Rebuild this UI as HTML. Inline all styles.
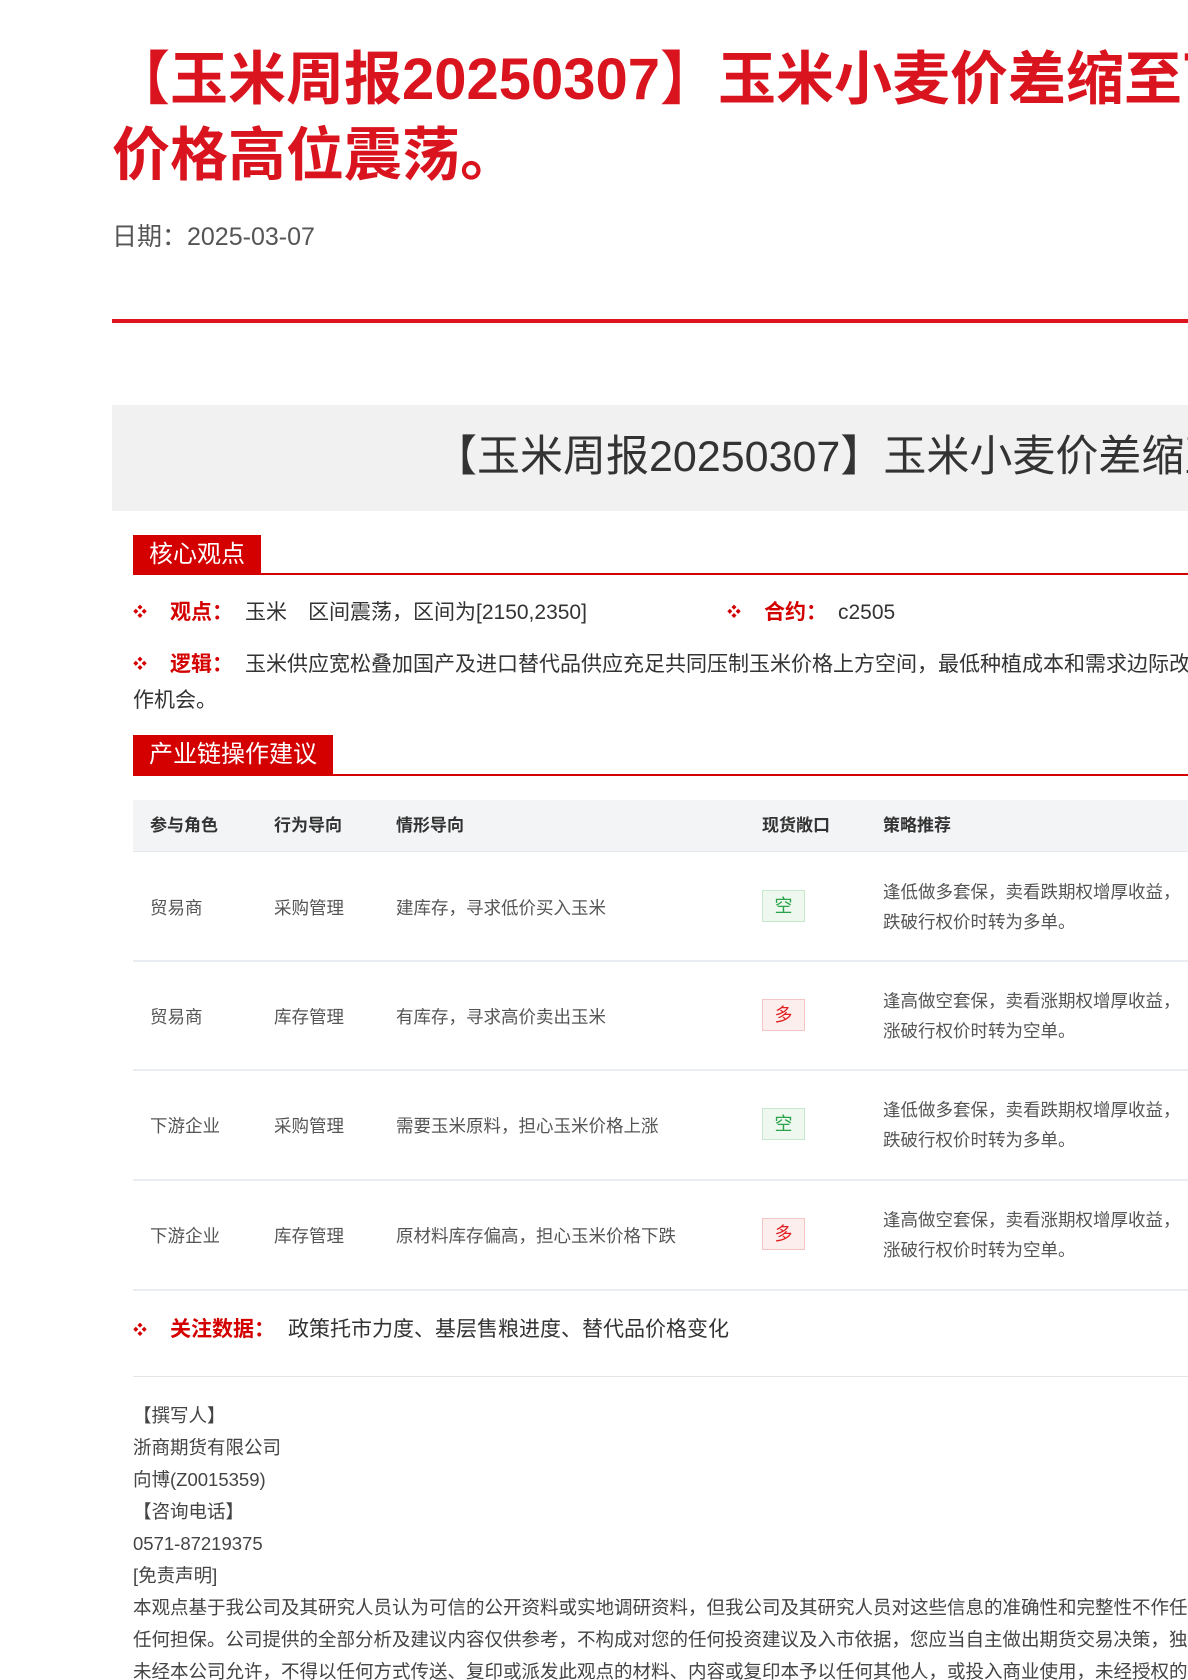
<!DOCTYPE html>
<html><head><meta charset="utf-8"><style>
*{margin:0;padding:0;box-sizing:border-box}
html,body{width:1188px;height:1680px;overflow:hidden;background:#fff}
body{position:relative;font-family:"Liberation Sans","Noto Sans CJK SC",sans-serif;color:#333}
.a{position:absolute;white-space:nowrap;line-height:1.2}
.title{left:112px;top:42px;font-size:58px;font-weight:bold;color:#d9141e;line-height:76px!important}
.date{left:112px;top:222px;font-size:25px;color:#555}
.redline{left:112px;top:319px;width:1100px;height:4px;background:#e0141e}
.gbox{left:112px;top:405px;width:1100px;height:106px;background:#f1f1f1}
.gtitle{left:434px;top:432px;font-size:43px;color:#333;line-height:50px!important}
.sec{left:133px;height:40px;background:#d40000;color:#fff;font-size:24px;line-height:40px!important;padding:0 16px}
.secline{left:133px;width:1100px;height:2px;background:#d40000}
.b{color:#d40000;font-size:14px}
.lbl{color:#d40000;font-weight:bold;font-size:21px}
.t{font-size:21px;color:#333}
.th{left:133px;top:800px;width:1100px;height:52px;background:#f3f4f6;border-bottom:1px solid #e5e8ee}
.h{font-size:17px;font-weight:bold;color:#333;top:816px}
.c{font-size:17.5px;color:#555}
.rl{left:133px;width:1100px;height:2px;background:#e9ecf1}
.tag{width:43px;height:32px;font-size:18px;text-align:center;line-height:30px!important;border:1px solid}
.k{color:#2aa24a;background:#eef8ef;border-color:#c7e8cc}
.d{color:#e02020;background:#fdeeee;border-color:#f5c4c4}
.f{left:133px;font-size:18.5px;color:#444}
</style></head><body>
<div class="a title">【玉米周报20250307】玉米小麦价差缩至可<br>价格高位震荡。</div>
<div class="a date">日期：2025-03-07</div>
<div class="a redline"></div>
<div class="a gbox"></div>
<div class="a gtitle">【玉米周报20250307】玉米小麦价差缩至可</div>

<div class="a sec" style="top:535px">核心观点</div>
<div class="a secline" style="top:573px"></div>
<div class="a b" style="left:133px;top:604px">❖</div>
<div class="a lbl" style="left:170px;top:600px">观点：</div>
<div class="a t" style="left:245px;top:600px">玉米　区间震荡，区间为[2150,2350]</div>
<div class="a b" style="left:727px;top:604px">❖</div>
<div class="a lbl" style="left:764px;top:600px">合约：</div>
<div class="a t" style="left:838px;top:600px">c2505</div>
<div class="a b" style="left:133px;top:656px">❖</div>
<div class="a lbl" style="left:170px;top:652px">逻辑：</div>
<div class="a t" style="left:245px;top:652px">玉米供应宽松叠加国产及进口替代品供应充足共同压制玉米价格上方空间，最低种植成本和需求边际改善</div>
<div class="a t" style="left:133px;top:688px">作机会。</div>

<div class="a sec" style="top:735px">产业链操作建议</div>
<div class="a secline" style="top:774px"></div>

<div class="a th"></div>
<div class="a h" style="left:150px">参与角色</div>
<div class="a h" style="left:274px">行为导向</div>
<div class="a h" style="left:396px">情形导向</div>
<div class="a h" style="left:762px">现货敞口</div>
<div class="a h" style="left:883px">策略推荐</div>

<div class="a c" style="left:150px;top:898px">贸易商</div>
<div class="a c" style="left:274px;top:898px">采购管理</div>
<div class="a c" style="left:396px;top:898px">建库存，寻求低价买入玉米</div>
<div class="a tag k" style="left:762px;top:890px">空</div>
<div class="a c" style="left:883px;top:882px">逢低做多套保，卖看跌期权增厚收益，</div>
<div class="a c" style="left:883px;top:912px">跌破行权价时转为多单。</div>
<div class="a rl" style="top:960px"></div>

<div class="a c" style="left:150px;top:1007px">贸易商</div>
<div class="a c" style="left:274px;top:1007px">库存管理</div>
<div class="a c" style="left:396px;top:1007px">有库存，寻求高价卖出玉米</div>
<div class="a tag d" style="left:762px;top:999px">多</div>
<div class="a c" style="left:883px;top:991px">逢高做空套保，卖看涨期权增厚收益，</div>
<div class="a c" style="left:883px;top:1021px">涨破行权价时转为空单。</div>
<div class="a rl" style="top:1069px"></div>

<div class="a c" style="left:150px;top:1116px">下游企业</div>
<div class="a c" style="left:274px;top:1116px">采购管理</div>
<div class="a c" style="left:396px;top:1116px">需要玉米原料，担心玉米价格上涨</div>
<div class="a tag k" style="left:762px;top:1108px">空</div>
<div class="a c" style="left:883px;top:1100px">逢低做多套保，卖看跌期权增厚收益，</div>
<div class="a c" style="left:883px;top:1130px">跌破行权价时转为多单。</div>
<div class="a rl" style="top:1179px"></div>

<div class="a c" style="left:150px;top:1226px">下游企业</div>
<div class="a c" style="left:274px;top:1226px">库存管理</div>
<div class="a c" style="left:396px;top:1226px">原材料库存偏高，担心玉米价格下跌</div>
<div class="a tag d" style="left:762px;top:1218px">多</div>
<div class="a c" style="left:883px;top:1210px">逢高做空套保，卖看涨期权增厚收益，</div>
<div class="a c" style="left:883px;top:1240px">涨破行权价时转为空单。</div>
<div class="a rl" style="top:1289px"></div>

<div class="a b" style="left:133px;top:1322px">❖</div>
<div class="a lbl" style="left:170px;top:1317px">关注数据：</div>
<div class="a t" style="left:288px;top:1317px">政策托市力度、基层售粮进度、替代品价格变化</div>
<div class="a" style="left:133px;top:1376px;width:1100px;height:1px;background:#e5e5e5"></div>

<div class="a f" style="top:1405px">【撰写人】</div>
<div class="a f" style="top:1437px">浙商期货有限公司</div>
<div class="a f" style="top:1469px">向博(Z0015359)</div>
<div class="a f" style="top:1501px">【咨询电话】</div>
<div class="a f" style="top:1533px">0571-87219375</div>
<div class="a f" style="top:1565px">[免责声明]</div>
<div class="a f" style="top:1597px">本观点基于我公司及其研究人员认为可信的公开资料或实地调研资料，但我公司及其研究人员对这些信息的准确性和完整性不作任何</div>
<div class="a f" style="top:1629px">任何担保。公司提供的全部分析及建议内容仅供参考，不构成对您的任何投资建议及入市依据，您应当自主做出期货交易决策，独立</div>
<div class="a f" style="top:1661px">未经本公司允许，不得以任何方式传送、复印或派发此观点的材料、内容或复印本予以任何其他人，或投入商业使用，未经授权的</div>
</body></html>
